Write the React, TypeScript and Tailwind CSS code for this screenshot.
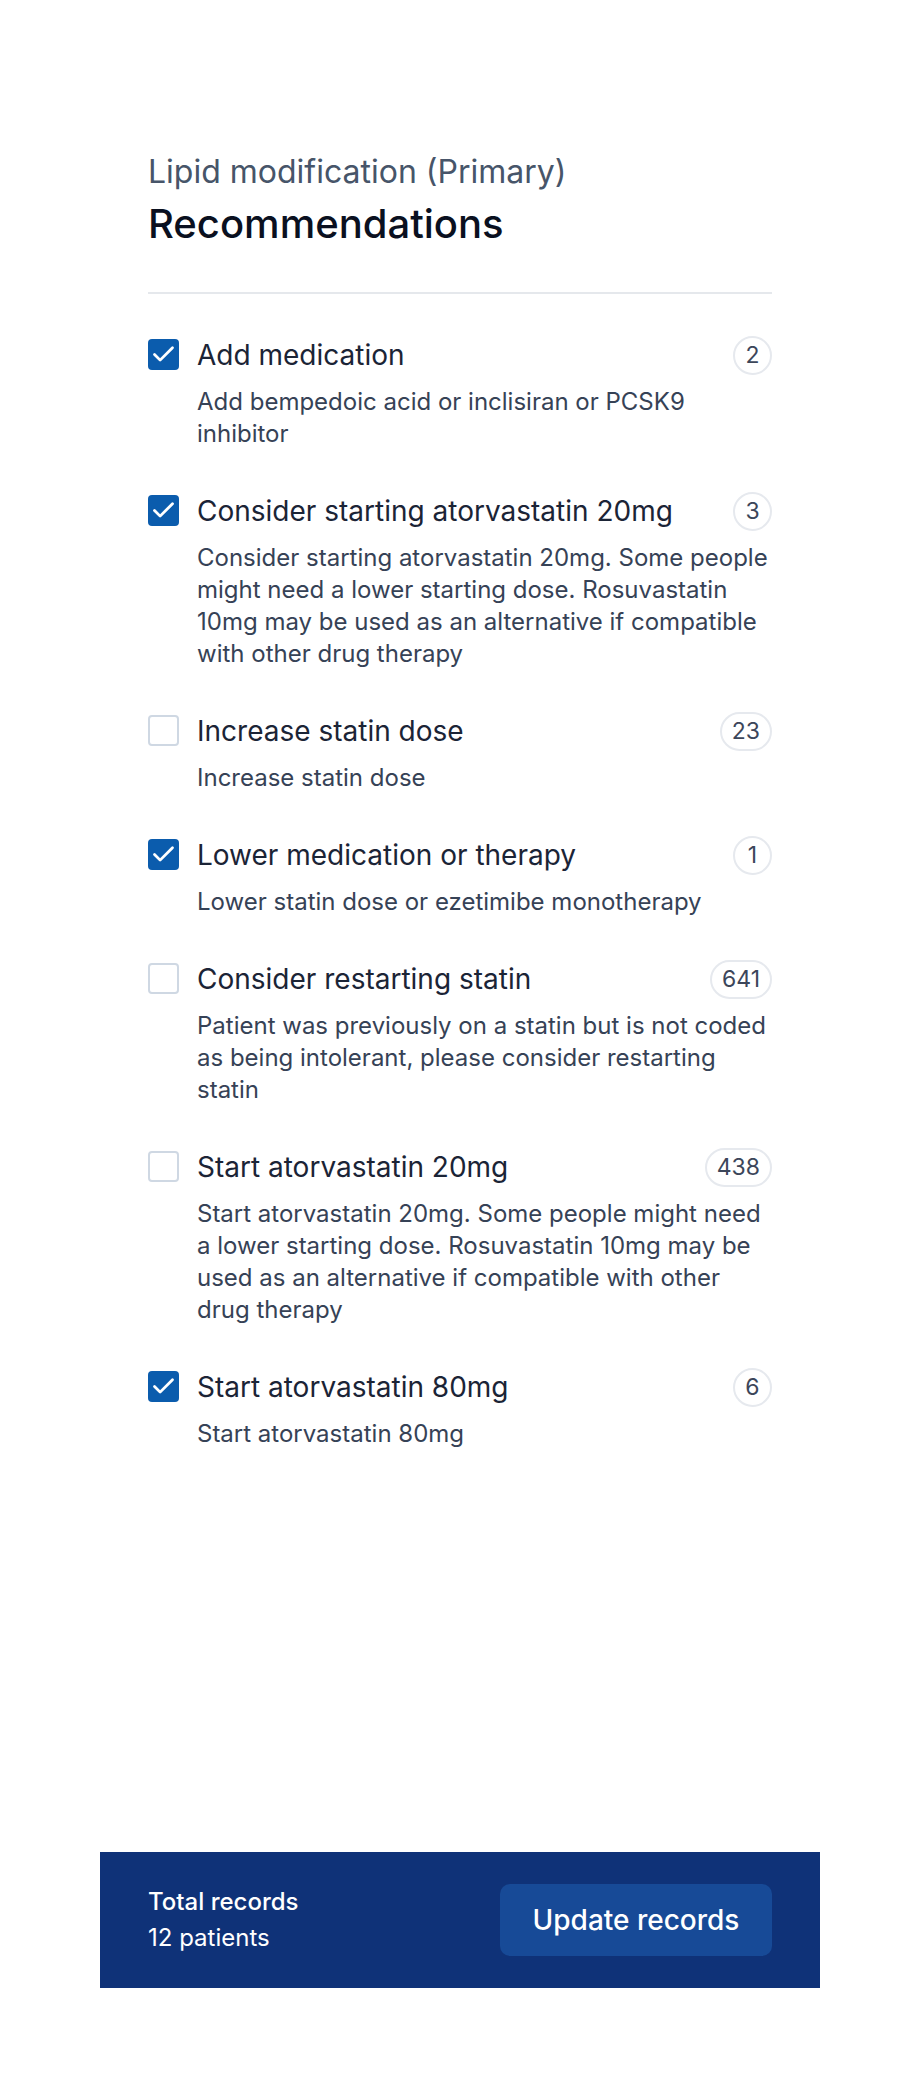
import { Check } from "lucide-react";

interface Recommendation {
  id: number;
  title: string;
  description: string;
  count: number;
  checked: boolean;
}

const recommendations: Recommendation[] = [
  {
    id: 1,
    title: "Add medication",
    description: "Add bempedoic acid or inclisiran or PCSK9 inhibitor",
    count: 2,
    checked: true,
  },
  {
    id: 2,
    title: "Consider starting atorvastatin 20mg",
    description:
      "Consider starting atorvastatin 20mg. Some people might need a lower starting dose. Rosuvastatin 10mg may be used as an alternative if compatible with other drug therapy",
    count: 3,
    checked: true,
  },
  {
    id: 3,
    title: "Increase statin dose",
    description: "Increase statin dose",
    count: 23,
    checked: false,
  },
  {
    id: 4,
    title: "Lower medication or therapy",
    description: "Lower statin dose or ezetimibe monotherapy",
    count: 1,
    checked: true,
  },
  {
    id: 5,
    title: "Consider restarting statin",
    description:
      "Patient was previously on a statin but is not coded as being intolerant, please consider restarting statin",
    count: 641,
    checked: false,
  },
  {
    id: 6,
    title: "Start atorvastatin 20mg",
    description:
      "Start atorvastatin 20mg. Some people might need a lower starting dose. Rosuvastatin 10mg may be used as an alternative if compatible with other drug therapy",
    count: 438,
    checked: false,
  },
  {
    id: 7,
    title: "Start atorvastatin 80mg",
    description: "Start atorvastatin 80mg",
    count: 6,
    checked: true,
  },
];

function Checkbox({ checked }: { checked: boolean }) {
  return checked ? (
    <span className="mt-[2px] flex h-[31px] w-[31px] shrink-0 items-center justify-center rounded-[4px] bg-[#0b5cad]">
      <Check className="h-[27px] w-[27px] text-white" strokeWidth={2.5} />
    </span>
  ) : (
    <span className="mt-[2px] h-[31px] w-[31px] shrink-0 rounded-[4px] border-2 border-[#cfd8e3] bg-white" />
  );
}

function RecommendationItem({ item }: { item: Recommendation }) {
  return (
    <li className="flex gap-[18px]">
      <Checkbox checked={item.checked} />
      <div className="flex-1">
        <div className="flex h-[36px] items-center justify-between gap-4">
          <span className="text-[28px] leading-[36px] text-[#1b2436]">
            {item.title}
          </span>
          <span className="flex h-[39px] min-w-[39px] items-center justify-center rounded-full border-2 border-[#e6e9ee] px-[10px] text-[23px] text-[#3c465a]">
            {item.count}
          </span>
        </div>
        <p className="mt-[13px] text-[24px] leading-[32px] text-[#364256]">
          {item.description}
        </p>
      </div>
    </li>
  );
}

export default function App() {
  return (
    <div className="flex min-h-screen flex-col bg-white pb-[108px] font-['Inter',sans-serif] antialiased">
      <main className="mx-auto w-[624px] pt-[152px]">
        <p className="text-[32px] leading-[40px] text-[#475569]">
          Lipid modification (Primary)
        </p>
        <h1 className="mt-[8px] text-[40px] font-medium leading-[48px] text-[#0a1020]">
          Recommendations
        </h1>
        <hr className="mt-[44px] border-t-2 border-[#e5e8ec]" />
        <ul className="mt-[43px] flex flex-col gap-[43px]">
          {recommendations.map((item) => (
            <RecommendationItem key={item.id} item={item} />
          ))}
        </ul>
      </main>

      <footer className="mx-auto mt-auto flex h-[136px] w-[720px] items-center justify-between bg-[#0f3278] px-[48px]">
        <div className="text-[24px] leading-[36px] text-white">
          <p className="font-medium">Total records</p>
          <p>12 patients</p>
        </div>
        <button className="h-[72px] w-[272px] rounded-[10px] bg-[#174a97] text-[28px] font-medium text-white">
          Update records
        </button>
      </footer>
    </div>
  );
}
